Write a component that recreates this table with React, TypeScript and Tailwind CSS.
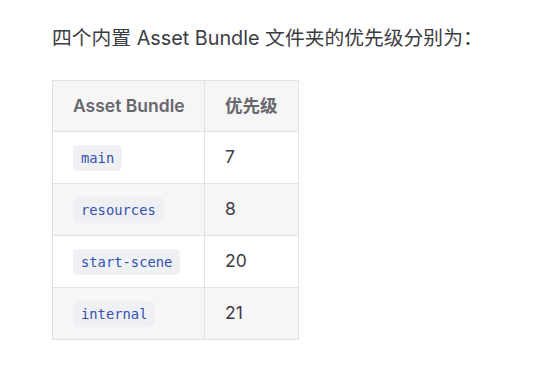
import React from 'react';

const rows: { name: string; priority: number }[] = [
    { name: 'main', priority: 7 },
    { name: 'resources', priority: 8 },
    { name: 'start-scene', priority: 20 },
    { name: 'internal', priority: 21 },
];

const App: React.FC = () => {
    return (
        <div className="min-h-[372px] bg-white px-[52px] pt-[24px] text-[#3c3c43]" style={{ fontFamily: 'Inter, "Noto Sans CJK SC", sans-serif' }}>
            <p className="text-[19.8px] leading-[28px]">四个内置 Asset Bundle 文件夹的优先级分别为：</p>
            <table className="mt-[28px] w-[246px] table-fixed border-collapse whitespace-nowrap text-[17.5px]">
                <colgroup>
                    <col className="w-[152px]" />
                    <col className="w-[94px]" />
                </colgroup>
                <thead>
                    <tr className="bg-[#f6f6f7]">
                        <th className="h-[51px] border border-[#e2e2e3] pl-[20px] text-left font-semibold text-[#67676c]">Asset Bundle</th>
                        <th className="h-[51px] border border-[#e2e2e3] pl-[20px] text-left font-semibold text-[#67676c]">优先级</th>
                    </tr>
                </thead>
                <tbody>
                    {rows.map((row, i) => (
                        <tr key={row.name} className={i % 2 === 1 ? 'bg-[#f6f6f7]' : 'bg-white'}>
                            <td className="h-[52px] border border-[#e2e2e3] pl-[20px]">
                                <code className="rounded-[5px] bg-[#eef0f3] px-[8px] py-[5px] text-[13.8px] text-[#3451b2]" style={{ fontFamily: '"DejaVu Sans Mono", monospace' }}>
                                    {row.name}
                                </code>
                            </td>
                            <td className="h-[52px] border border-[#e2e2e3] pl-[20px]">{row.priority}</td>
                        </tr>
                    ))}
                </tbody>
            </table>
        </div>
    );
};

export default App;
